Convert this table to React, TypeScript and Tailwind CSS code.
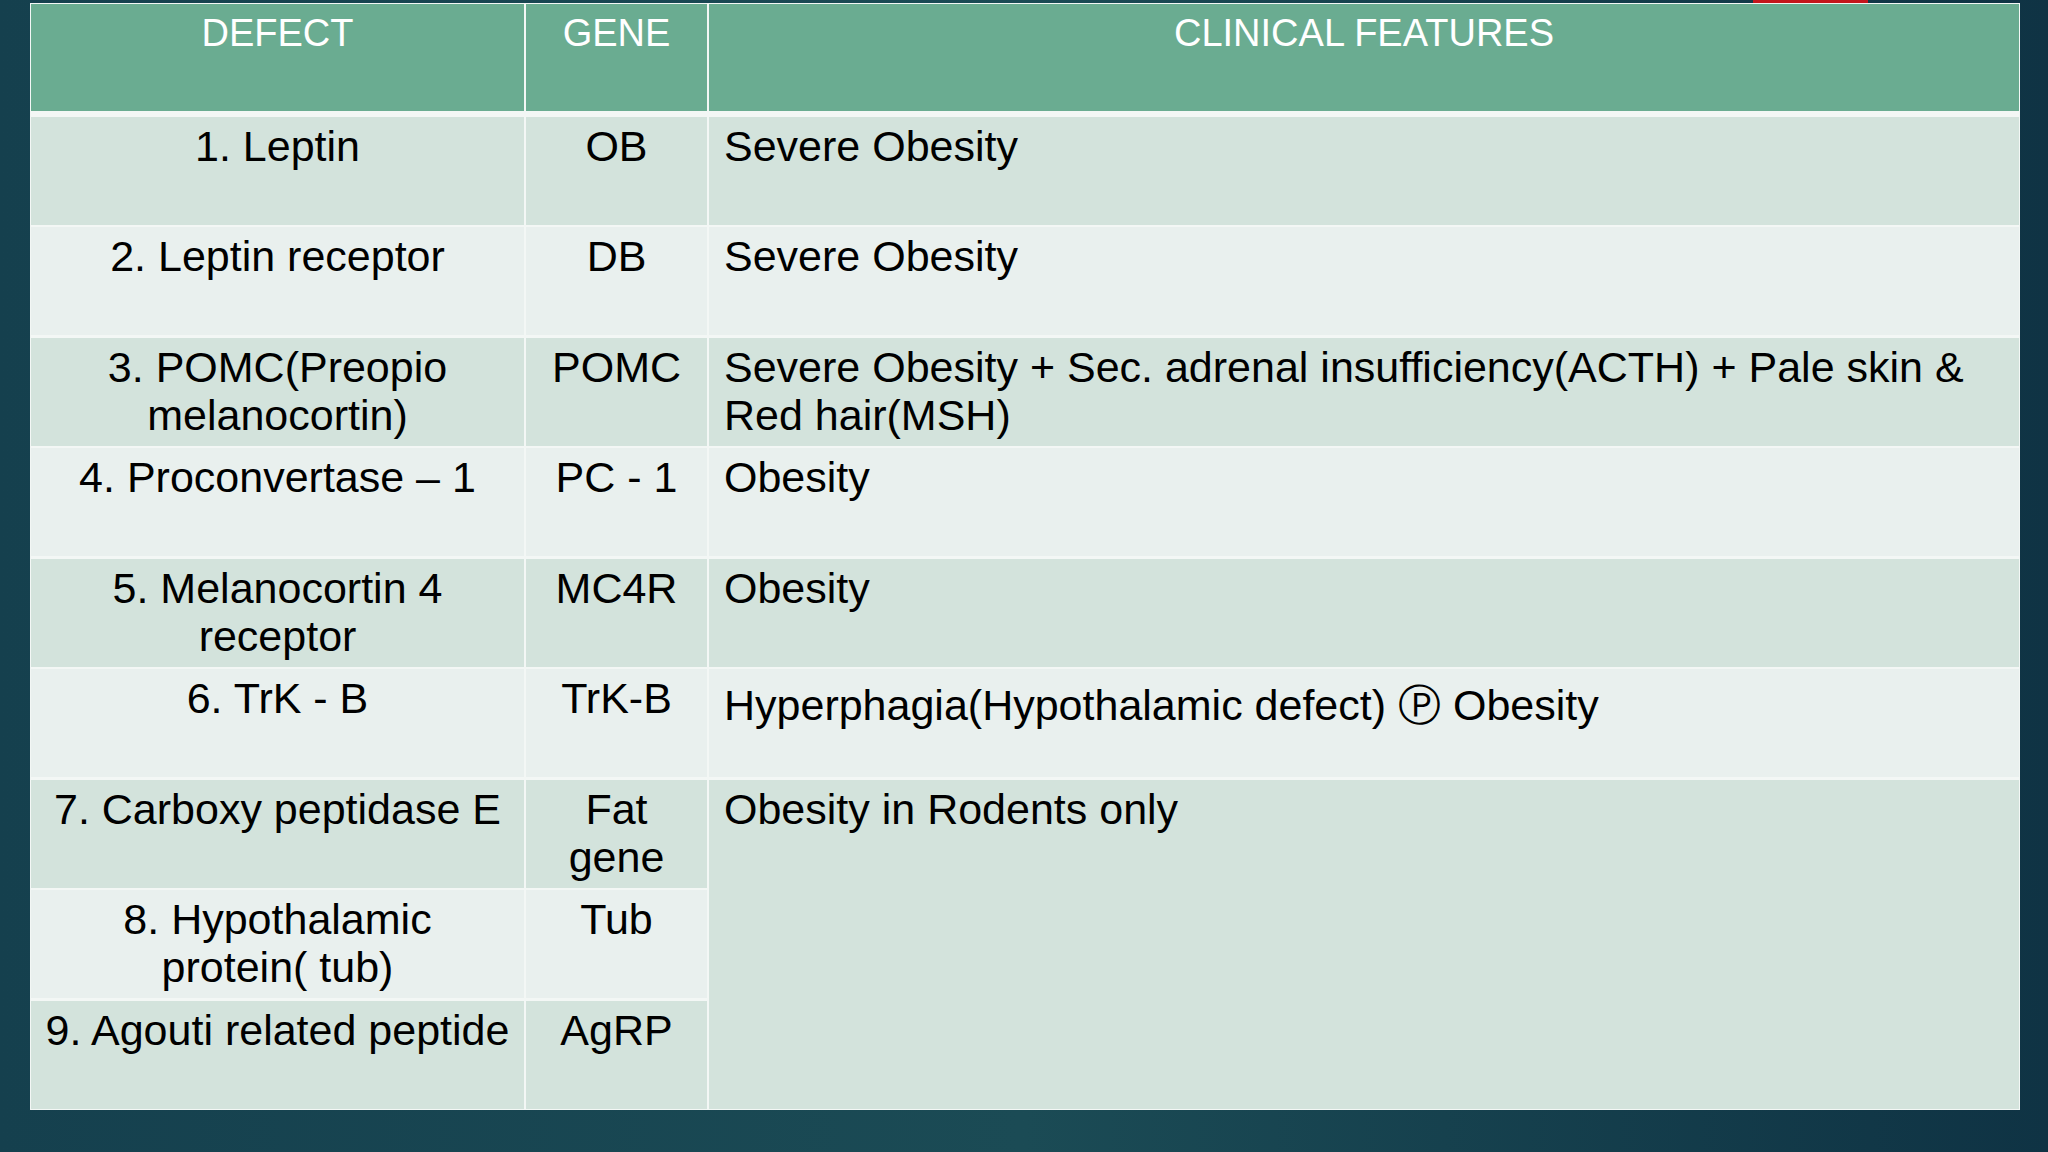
import React from 'react'

type Row = {
  defect: string[]
  gene: string[]
  features?: string[]
  featuresClass?: string
}

const rows: Row[] = [
  { defect: ['1. Leptin'], gene: ['OB'], features: ['Severe Obesity'] },
  { defect: ['2. Leptin receptor'], gene: ['DB'], features: ['Severe Obesity'] },
  {
    defect: ['3. POMC(Preopio', 'melanocortin)'],
    gene: ['POMC'],
    features: ['Severe Obesity + Sec. adrenal insufficiency(ACTH) + Pale skin &', 'Red hair(MSH)'],
  },
  { defect: ['4. Proconvertase \u2013 1'], gene: ['PC - 1'], features: ['Obesity'] },
  { defect: ['5. Melanocortin 4', 'receptor'], gene: ['MC4R'], features: ['Obesity'] },
  {
    defect: ['6. TrK - B'],
    gene: ['TrK-B'],
    features: ['Hyperphagia(Hypothalamic defect) \u24C5 Obesity'],
    featuresClass: 'pt-[12px]',
  },
  { defect: ['7. Carboxy peptidase E'], gene: ['Fat', 'gene'] },
  { defect: ['8. Hypothalamic', 'protein( tub)'], gene: ['Tub'] },
  { defect: ['9. Agouti related peptide'], gene: ['AgRP'] },
]

function Lines({ lines }: { lines: string[] }) {
  return (
    <>
      {lines.map((l, i) => (
        <div key={i} className="whitespace-nowrap">
          {l}
        </div>
      ))}
    </>
  )
}

export default function App() {
  return (
    <div
      className="relative w-[2048px] h-[1152px] overflow-hidden bg-gradient-to-r from-[#15404e] via-[#1b4b55] to-[#0f3344] pl-[30px] pt-[3px]"
      style={{ fontFamily: '"Liberation Sans", Arial, sans-serif' }}
    >
      {/* red strip peeking from behind the table */}
      <div className="absolute left-[1753px] top-0 w-[115px] h-[3px] bg-[#c4161c]" />

      <div className="relative w-[1990px] bg-[#f3f7f5] p-[1px]">
        <div className="grid grid-cols-[493px_181px_1310px] grid-rows-[110px_repeat(9,108px)] gap-x-[2px] gap-y-[2.5px] text-black text-[43px] leading-[48px]">
          {/* header */}
          {['DEFECT', 'GENE', 'CLINICAL FEATURES'].map((h) => (
            <div
              key={h}
              className="bg-[#6aac91] border-b-[3px] border-[#f3f7f5] text-white text-center text-[38px] leading-[44px] pt-[7px]"
            >
              {h}
            </div>
          ))}

          {rows.map((r, i) => {
            const bg = i % 2 === 0 ? 'bg-[#d3e3dc]' : 'bg-[#e9f0ee]'
            return (
              <React.Fragment key={i}>
                <div className={`${bg} text-center pt-[5px]`}>
                  <Lines lines={r.defect} />
                </div>
                <div className={`${bg} text-center pt-[5px]`}>
                  <Lines lines={r.gene} />
                </div>
                {r.features && (
                  <div className={`${bg} pl-[15px] ${r.featuresClass ?? 'pt-[5px]'}`}>
                    <Lines lines={r.features} />
                  </div>
                )}
                {i === 6 && (
                  <div className="bg-[#d3e3dc] row-span-3 pl-[15px] pt-[5px]">
                    Obesity in Rodents only
                  </div>
                )}
              </React.Fragment>
            )
          })}
        </div>
      </div>
    </div>
  )
}
